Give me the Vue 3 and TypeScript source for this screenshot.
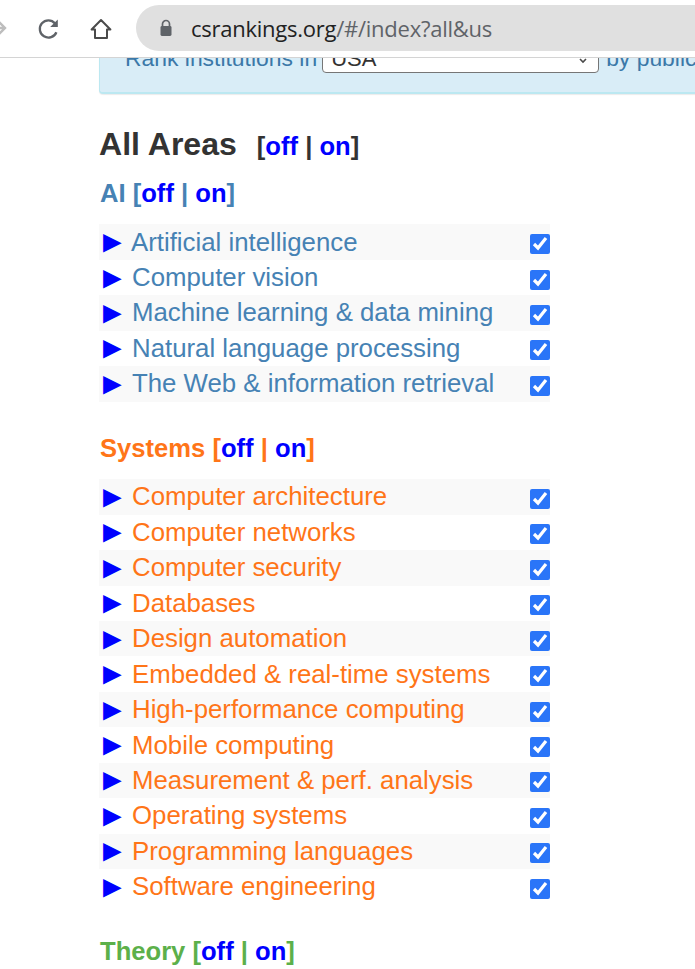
<template>
  <div class="page">
    <header class="toolbar">
      <svg class="forward" width="10" height="18" viewBox="0 0 10 18">
        <path d="M0 9h7M1 3l6 6-6 6" fill="none" stroke="#bdbdbd" stroke-width="2.4" />
      </svg>
      <svg class="reload" width="24" height="24" viewBox="0 0 24 24">
        <path d="M19.4 15.2A8.6 8.6 0 1 1 18 6.4" fill="none" stroke="#5f6368" stroke-width="2.3" />
        <path d="M20.8 2.4v7.6h-7.6z" fill="#5f6368" />
      </svg>
      <svg class="home" width="22" height="22" viewBox="0 0 22 22">
        <path d="M11 2 1.6 11.5H5V20h12v-8.5h3.4z" fill="none" stroke="#4a4a4a" stroke-width="2" stroke-linejoin="round" />
      </svg>
      <div class="omnibox">
        <svg class="lock" width="14" height="18" viewBox="0 0 14 18">
          <path d="M3.5 7V5a3.5 3.5 0 0 1 7 0v2" fill="none" stroke="#5f6368" stroke-width="1.7" />
          <rect x="1.5" y="7" width="11" height="10" rx="1.4" fill="#5f6368" />
        </svg>
        <span class="host">csrankings.org</span><span class="path">/#/index?all&amp;us</span>
      </div>
    </header>

    <main class="content">
      <div class="panel">
        <div class="panel-line">
          <span>Rank institutions in</span>
          <div class="select-wrap">
            <select class="region"><option>USA</option></select>
            <svg class="chevron" width="8" height="6" viewBox="0 0 8 6">
              <path d="M1 1l3 3 3-3" fill="none" stroke="#4a4a4a" stroke-width="1.6" />
            </svg>
          </div>
          <span class="by">by publications from</span>
        </div>
      </div>

      <h2 class="all-title">
        All Areas
        <span class="toggle">[<a>off</a> | <a>on</a>]</span>
      </h2>

      <section v-for="group in groups" :key="group.name" class="group" :class="group.cls">
        <h3 class="group-title">{{ group.name }} [<a>off</a> | <a>on</a>]</h3>
        <ul class="rows">
          <li v-for="area in group.areas" :key="area" class="row">
            <span class="arrow">►</span>
            <span class="label">{{ area }}</span>
            <input type="checkbox" class="check" checked />
          </li>
        </ul>
      </section>
    </main>
  </div>
</template>

<script setup lang="ts">
const groups = [
  {
    name: 'AI',
    cls: 'ai',
    areas: [
      'Artificial intelligence',
      'Computer vision',
      'Machine learning & data mining',
      'Natural language processing',
      'The Web & information retrieval',
    ],
  },
  {
    name: 'Systems',
    cls: 'systems',
    areas: [
      'Computer architecture',
      'Computer networks',
      'Computer security',
      'Databases',
      'Design automation',
      'Embedded & real-time systems',
      'High-performance computing',
      'Mobile computing',
      'Measurement & perf. analysis',
      'Operating systems',
      'Programming languages',
      'Software engineering',
    ],
  },
  { name: 'Theory', cls: 'theory', areas: [] as string[] },
]
</script>

<style>
html,
body {
  margin: 0;
  overflow: hidden;
  background: #fff;
}
</style>

<style scoped>
.page {
  width: 695px;
  height: 969px;
  overflow: hidden;
  font-family: "Liberation Sans", Arial, sans-serif;
  color: #333;
}

.toolbar {
  height: 58px;
  box-sizing: border-box;
  border-bottom: 1px solid #d4d4d4;
  display: flex;
  align-items: flex-start;
  overflow: hidden;
}

.forward {
  margin: 19px 0 0 -2px;
  flex: none;
}

.reload {
  margin: 17px 0 0 29px;
  flex: none;
}

.home {
  margin: 18px 0 0 29px;
  flex: none;
}

.omnibox {
  margin: 5px -60px 0 24px;
  height: 46px;
  flex: 1;
  background: #e0e0e0;
  border-radius: 23px;
  display: flex;
  align-items: center;
  padding-left: 23px;
  font-size: 22px;
  white-space: nowrap;
  font-family: "Open Sans", sans-serif;
  letter-spacing: -0.25px;
}

.lock {
  margin-right: 18px;
  flex: none;
}

.host {
  color: #222;
}

.path {
  color: #5f6368;
}

.content {
  padding-left: 99px;
}

.panel {
  width: 700px;
  height: 36px;
  box-sizing: border-box;
  background: #d9edf7;
  border: 1px solid #bce8f1;
  border-width: 0 0 2px 1px;
  border-radius: 0 0 0 4px;
  box-shadow: 0 1px 1px rgba(0, 0, 0, 0.08);
  overflow: hidden;
  padding-left: 25px;
  font-size: 22.9px;
  white-space: nowrap;
}

.panel-line {
  display: flex;
  align-items: center;
  gap: 5px;
  height: 30px;
  margin-top: -15px;
  color: #3b78a8;
}

.select-wrap {
  position: relative;
  flex: none;
  height: 30px;
}

.region {
  display: block;
  width: 277px;
  height: 30px;
  appearance: none;
  font-family: inherit;
  font-size: 22px;
  color: #333;
  background: #fff;
  border: 1px solid #767676;
  border-radius: 4px;
  padding: 0 0 0 8px;
}

.chevron {
  position: absolute;
  right: 12px;
  top: 15px;
}

.by {
  margin-left: 2px;
}

.all-title {
  margin: 30px 0 0;
  font-size: 32.1px;
  line-height: 40px;
  font-weight: 700;
  color: #333;
}

.toggle {
  font-size: 25.6px;
  margin-left: 11px;
}

a {
  color: #00f;
}

.group-title {
  margin: 12px 0 16.4px;
  font-size: 25.6px;
  line-height: 30px;
  font-weight: 700;
  padding-left: 1px;
}

.group {
  margin-bottom: 31.3px;
}

.ai {
  color: #4682b4;
}

.systems {
  color: #ff7518;
}

.theory {
  color: #5cb04a;
}

.rows {
  list-style: none;
  margin: 0;
  padding: 0;
  width: 451px;
}

.row {
  height: 35.45px;
  display: flex;
  align-items: center;
  font-size: 25.8px;
  box-sizing: border-box;
}

.row:nth-child(odd) {
  background: #f9f9f9;
}

.arrow {
  color: #00f;
  width: 35px;
  margin-left: -2px;
  flex: none;
  font-size: 31px;
  line-height: 28px;
}

.ai .row:first-child .arrow {
  width: 34px;
}

.label {
  flex: 1;
  white-space: nowrap;
}

.check {
  width: 20px;
  height: 20px;
  margin: 4px 0 0;
  flex: none;
  accent-color: #2a75f8;
}
</style>
